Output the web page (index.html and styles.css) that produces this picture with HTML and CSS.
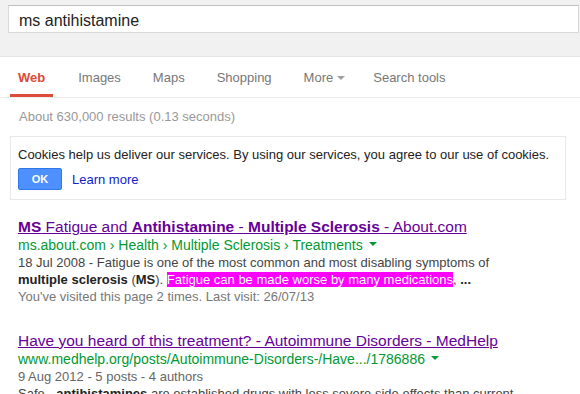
FILE: index.html
```html
<!DOCTYPE html>
<html>
<head>
<meta charset="utf-8">
<link rel="stylesheet" href="styles.css">
</head>
<body>
<div class="header">
  <div class="searchbox">ms antihistamine</div>
</div>
<div class="tabs">
  <span class="tab active">Web</span>
  <span class="tab">Images</span>
  <span class="tab">Maps</span>
  <span class="tab">Shopping</span>
  <span class="tab">More<span class="arrow grey"></span></span>
  <span class="tab tools">Search tools</span>
</div>
<div class="stats">About 630,000 results (0.13 seconds)</div>
<div class="cookie">
  <div class="cookie-text">Cookies help us deliver our services. By using our services, you agree to our use of cookies.</div>
  <div class="cookie-actions">
    <span class="btn">OK</span>
    <a class="learn">Learn more</a>
  </div>
</div>
<div class="result">
  <a class="title"><b>MS</b> Fatigue and <b>Antihistamine</b> - <b>Multiple Sclerosis</b> - About.com</a>
  <div class="url">ms.about.com › Health › Multiple Sclerosis › Treatments<span class="arrow green"></span></div>
  <div class="snippet">18 Jul 2008 - Fatigue is one of the most common and most disabling symptoms of <b>multiple sclerosis</b> (<b>MS</b>). <span class="hl">Fatigue can be made worse by many medications</span>, <b>...</b></div>
  <div class="visited">You've visited this page 2 times. Last visit: 26/07/13</div>
</div>
<div class="result second">
  <a class="title">Have you heard of this treatment? - Autoimmune Disorders - MedHelp</a>
  <div class="url">www.medhelp.org/posts/Autoimmune-Disorders-/Have.../1786886<span class="arrow green"></span></div>
  <div class="date">9 Aug 2012 - 5 posts - 4 authors</div>
  <div class="snippet">Safe - <b>antihistamines</b> are established drugs with less severe side effects than current</div>
</div>
</body>
</html>
```
FILE: styles.css
```css
html, body {
  margin: 0;
  padding: 0;
  background: #fff;
  font-family: "Liberation Sans", Arial, sans-serif;
  overflow: hidden;
}
.header {
  height: 51px;
  background: #f1f1f1;
  padding: 5px 0 0 8px;
  border-bottom: 1px solid #e5e5e5;
}
.searchbox {
  width: 559px;
  height: 24px;
  padding-top: 2px;
  border: 1px solid #d9d9d9;
  border-top-color: #c0c0c0;
  background: #fff;
  font-size: 16px;
  line-height: 26px;
  padding-left: 10px;
  color: #222;
}
.tabs {
  display: flex;
  height: 40px;
  padding-left: 10px;
  border-bottom: 1px solid #ebebeb;
  font-size: 13px;
  color: #777;
}
.tab {
  display: flex;
  align-items: center;
  padding: 4px 8px 0;
  margin-right: 16px;
  box-sizing: border-box;
  border-bottom: 3px solid transparent;
}
.tab.active {
  color: #dd4b39;
  font-weight: bold;
  border-bottom-color: #dd4b39;
  margin-right: 17px;
}
.tab.tools {
  margin-left: -4px;
}
.arrow {
  display: inline-block;
  width: 0;
  height: 0;
  border-left: 4px solid transparent;
  border-right: 4px solid transparent;
  border-top: 4px solid #909090;
  margin-left: 4px;
  vertical-align: middle;
}
.arrow.grey {
  border-top-color: #a0a0a0;
}
.arrow.green {
  border-top-color: #093;
  margin-left: 6px;
  position: relative;
  top: -2px;
}
.stats {
  font-size: 13px;
  line-height: 16px;
  color: #999;
  padding: 11px 0 0 19px;
}
.cookie {
  margin: 11px 0 0 10px;
  width: 540px;
  border: 1px solid #e8e8e8;
  padding: 10px 7px 9px;
}
.cookie-text {
  font-size: 13px;
  line-height: 16px;
  color: #222;
}
.cookie-actions {
  display: flex;
  align-items: center;
  margin-top: 5px;
}
.btn {
  width: 42px;
  height: 20px;
  background: #4d90fe;
  border: 1px solid #3079ed;
  border-radius: 2px;
  color: #fff;
  font-size: 11px;
  font-weight: bold;
  display: flex;
  align-items: center;
  justify-content: center;
}
.learn {
  margin-left: 10px;
  font-size: 13px;
  color: #12c;
}
.result {
  padding-left: 18px;
  margin-top: 17px;
}
.result.second {
  margin-top: 26px;
}
.title {
  display: block;
  font-size: 15.5px;
  line-height: 19px;
  color: #609;
  text-decoration: underline;
}
.url {
  font-size: 14px;
  line-height: 18px;
  color: #093;
}
.snippet {
  font-size: 13px;
  line-height: 17px;
  color: #444;
  width: 520px;
}
.snippet b {
  color: #222;
}
.hl {
  background: #ff00ff;
  color: #fff;
}
.visited, .date {
  font-size: 13px;
  line-height: 17px;
  color: #777;
}
.date {
  color: #666;
}
```
